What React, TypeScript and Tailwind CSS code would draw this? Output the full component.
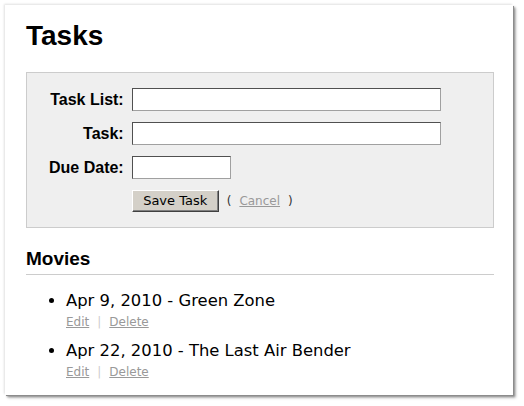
export default function App() {
  const movies = [
    { date: 'Apr 9, 2010', title: 'Green Zone' },
    { date: 'Apr 22, 2010', title: 'The Last Air Bender' },
  ]

  const inputCls =
    'h-[23px] bg-white border border-t-[#505050] border-l-[#505050] border-r-[#a0a0a0] border-b-[#a0a0a0] outline-none'

  return (
    <div className="w-[524px] h-[406px] bg-white pt-[5px] pl-[5px] font-['DejaVu_Sans',sans-serif] text-black">
      <div className="w-[508px] h-[390px] bg-white pt-[15px] pl-[21px] pr-[19px] shadow-[1px_1px_0_#8c8c8c,2px_2px_2px_rgba(0,0,0,0.35),3px_3px_3px_rgba(0,0,0,0.2),-1px_-1px_2px_rgba(0,0,0,0.12)]">
        <h1 className="font-['Liberation_Sans',Arial,sans-serif] font-bold text-[28px] leading-[32px]">
          Tasks
        </h1>

        <form
          onSubmit={(e) => e.preventDefault()}
          className="mt-[20px] bg-[#efefef] border border-[#cccccc] pt-[15px] pb-[15px] pl-[22px]"
        >
          <div className="grid grid-cols-[auto_auto] justify-start gap-x-2 gap-y-[11px] items-center">
            <label className="text-right font-['Liberation_Sans',Arial,sans-serif] font-bold text-[16px] leading-[20px]">
              Task List:
            </label>
            <input className={`${inputCls} w-[309px]`} />

            <label className="text-right font-['Liberation_Sans',Arial,sans-serif] font-bold text-[16px] leading-[20px]">
              Task:
            </label>
            <input className={`${inputCls} w-[309px]`} />

            <label className="text-right font-['Liberation_Sans',Arial,sans-serif] font-bold text-[16px] leading-[20px]">
              Due Date:
            </label>
            <input className={`${inputCls} w-[99px]`} />

            <div />
            <div className="flex items-center text-[12px] leading-[16px]">
              <button
                type="submit"
                className="h-[22px] w-[87px] bg-[#d4d0c8] text-[13px] text-black border border-t-white border-l-white border-r-[#404040] border-b-[#404040] shadow-[inset_-1px_-1px_0_#808080]"
              >
                Save Task
              </button>
              <span className="ml-[8px] text-[#333]">(</span>
              <a href="#" className="ml-[8px] text-[#999] underline">
                Cancel
              </a>
              <span className="ml-[8px] text-[#333]">)</span>
            </div>
          </div>
        </form>

        <h2 className="mt-[19px] pb-[3px] border-b border-[#cccccc] font-['Liberation_Sans',Arial,sans-serif] font-bold text-[19px] leading-[24px]">
          Movies
        </h2>

        <ul className="mt-[14px] pl-[40px] list-disc space-y-[9px]">
          {movies.map((m) => (
            <li key={m.title}>
              <div className="text-[16.4px] leading-[20px]">
                {m.date} - {m.title}
              </div>
              <div className="mt-[3px] text-[12px] leading-[16px] text-[#999]">
                <a href="#" className="underline">
                  Edit
                </a>
                <span className="mx-[8px] text-[#ccc]">|</span>
                <a href="#" className="underline">
                  Delete
                </a>
              </div>
            </li>
          ))}
        </ul>
      </div>
    </div>
  )
}
